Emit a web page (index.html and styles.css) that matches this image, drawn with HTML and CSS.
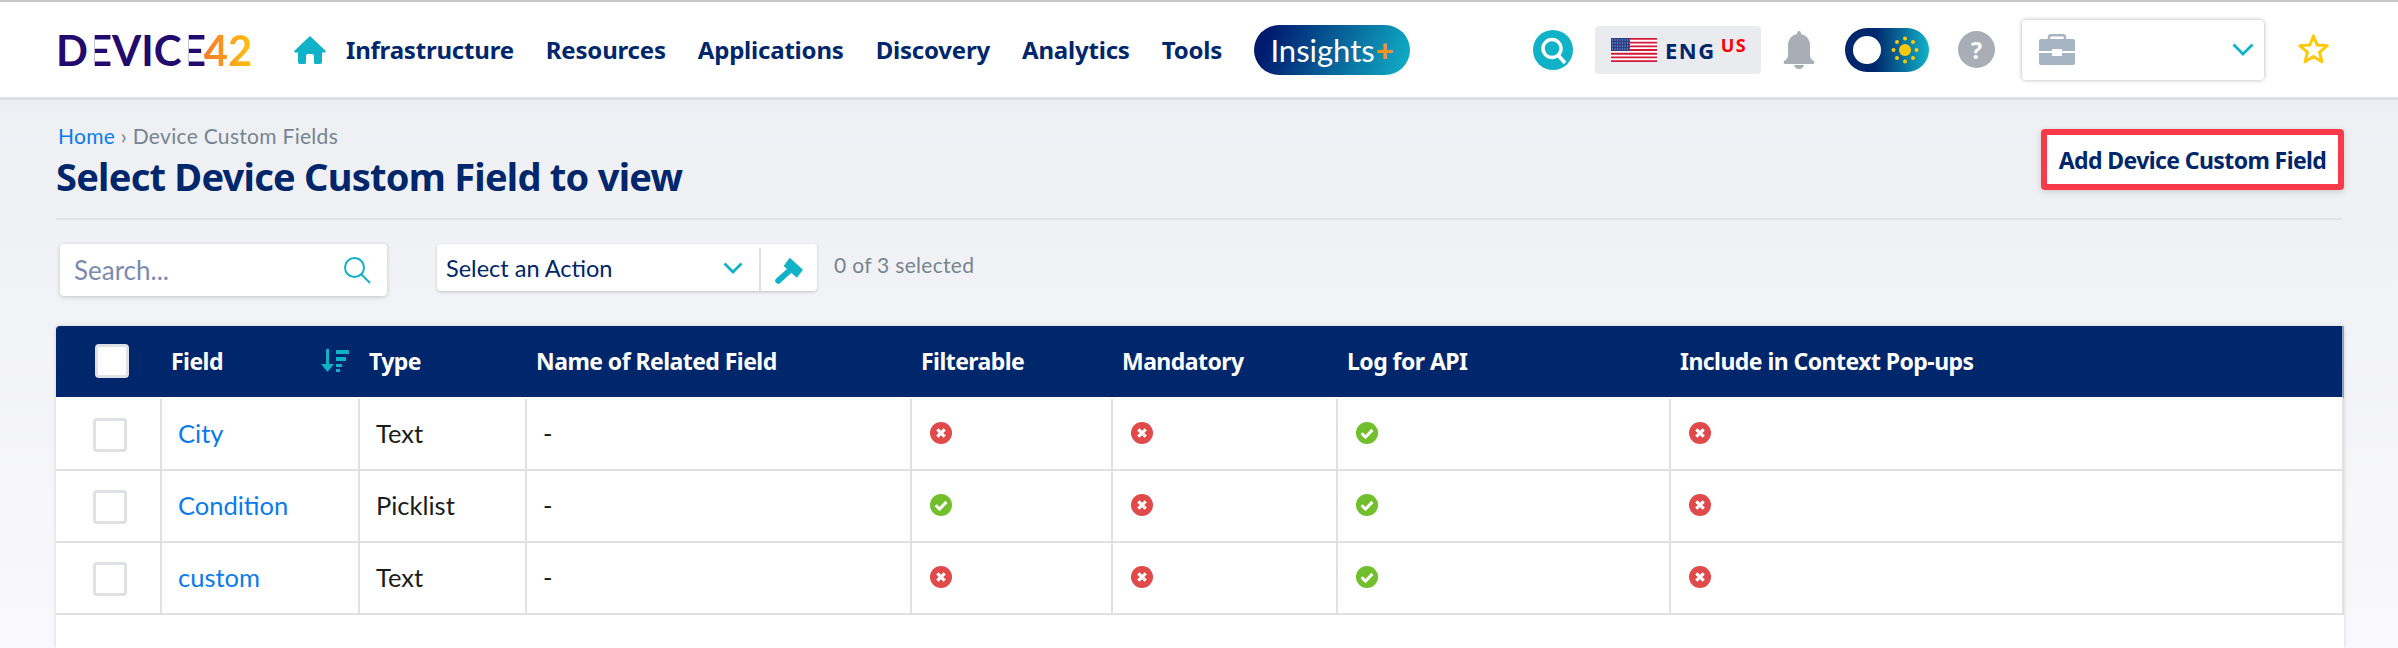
FILE: index.html
```html
<!DOCTYPE html>
<html lang="en">

<head>
    <meta charset="UTF-8">
    <meta name="viewport" content="width=device-width, initial-scale=1.0">
    <title>Device Custom Fields</title>
    <link rel="stylesheet" href="styles.css">
</head>

<body>
    <svg class="defs" width="0" height="0">
        <symbol id="no" viewBox="0 0 22 22">
            <circle cx="11" cy="11" r="11" fill="#e04a4a" />
            <path d="M7.3 7.3l7.4 7.4M14.7 7.3l-7.4 7.4" stroke="#fff" stroke-width="3.2" />
        </symbol>
        <symbol id="yes" viewBox="0 0 22 22">
            <circle cx="11" cy="11" r="11" fill="#72bf2c" />
            <path d="M5.6 11.2l3.9 3.9 7-7.2" stroke="#fff" stroke-width="3" fill="none" />
        </symbol>
    </svg>

    <header class="topbar">
        <a class="logo">D<span class="logo-e">E</span>VIC<span class="logo-e">E</span><span class="logo-num">42</span></a>
        <svg class="home-icon" width="32" height="28" viewBox="0 0 32 28">
            <path fill="#10b2c8" d="M16 0L31.300 14.600Q32.500 16.500 30 16.500H28V26Q28 28 26 28H21Q20 28 20 26V20Q20 18 18 18H14Q12 18 12 20V26Q12 28 11 28H6Q4 28 4 26V16.500H2Q-.5 16.500 .7 14.600Z" />
        </svg>
        <nav class="nav">
            <a>Infrastructure</a>
            <a>Resources</a>
            <a>Applications</a>
            <a>Discovery</a>
            <a>Analytics</a>
            <a>Tools</a>
        </nav>
        <a class="insights">Insights<span class="plus">+</span></a>

        <svg class="search-icon" width="40" height="40" viewBox="0 0 40 40">
            <circle cx="20" cy="20" r="20" fill="#10b2c8" />
            <circle cx="19" cy="18.500" r="9" fill="none" stroke="#fff" stroke-width="3.500" />
            <path d="M25 25l7 8" stroke="#fff" stroke-width="3.500" />
        </svg>
        <div class="lang">
            <svg width="46" height="24" viewBox="0 0 46 24">
                <rect width="46" height="24" fill="#fff" />
                <path stroke="#d3193a" stroke-width="1.850" d="M0 .9H46M0 4.600H46M0 8.300H46M0 12H46M0 15.700H46M0 19.400H46M0 23.100H46" />
                <rect width="19" height="13" fill="#2a3f86" />
                <path stroke="#aab4d8" stroke-width="1" stroke-dasharray="1 1.500" d="M1 2H19M1 5H19M1 8H19M1 11H19" />
            </svg>
            <span class="lang-eng">ENG</span>
            <span class="lang-us">US</span>
        </div>
        <svg class="bell" width="32" height="38" viewBox="0 0 32 38">
            <path fill="#a9aeb6" d="M16 0Q18 0 18 3Q27 5 27 15V24Q27 28 31 30Q32 33 30 33H2Q0 33 1 30Q5 28 5 24V15Q5 5 14 3Q14 0 16 0Z" />
            <path fill="#a9aeb6" d="M11 34H21Q20 38 16 38Q12 38 11 34Z" />
        </svg>
        <div class="theme-toggle">
            <span class="knob"></span>
            <svg width="30" height="30" viewBox="0 0 30 30">
                <circle cx="15" cy="15" r="6" fill="#ffc90b" />
                <g fill="#ffc90b">
                    <circle cx="15" cy="3.500" r="2" />
                    <circle cx="15" cy="26.500" r="2" />
                    <circle cx="3.500" cy="15" r="2" />
                    <circle cx="26.500" cy="15" r="2" />
                    <circle cx="7" cy="7" r="2" />
                    <circle cx="23" cy="7" r="2" />
                    <circle cx="7" cy="23" r="2" />
                    <circle cx="23" cy="23" r="2" />
                </g>
            </svg>
        </div>
        <span class="help">?</span>
        <div class="tenant">
            <svg width="36" height="31" viewBox="0 0 36 31">
                <path fill="none" stroke="#a7b4c2" stroke-width="2.500" d="M10 6V3Q10 1.200 12 1.200H24Q26 1.200 26 3V6" />
                <path fill="#a7b4c2" d="M2 5H34Q36 5 36 7V17H23V15H13V17H0V7Q0 5 2 5Z" />
                <path fill="#a7b4c2" d="M0 19H13V22H23V19H36V29Q36 31 34 31H2Q0 31 0 29Z" />
            </svg>
            <svg width="22" height="13" viewBox="0 0 22 13">
                <path d="M1.500 1.500L11 11 20.500 1.500" fill="none" stroke="#10b2c8" stroke-width="2.800" />
            </svg>
        </div>
        <svg class="star" width="33" height="33" viewBox="0 0 33 33">
            <path fill="none" stroke="#ffc90b" stroke-width="3" stroke-linejoin="round" d="M16.500 3l3.700 9.100 10 .7-7.700 6.300 2.500 9.700-8.500-5.300-8.500 5.300 2.500-9.700-7.700-6.300 10-.7z" />
        </svg>
    </header>

    <main class="content">
        <div class="page-head">
            <div>
                <div class="breadcrumb"><a>Home</a> › Device Custom Fields</div>
                <h1>Select Device Custom Field to view</h1>
            </div>
            <button class="add-btn" type="button">Add Device Custom Field</button>
        </div>

        <div class="toolbar">
            <div class="search-box">
                <span class="search-text">Search...</span>
                <svg width="28" height="28" viewBox="0 0 28 28">
                    <circle cx="11.500" cy="11.500" r="9.500" fill="none" stroke="#10b2c8" stroke-width="2" />
                    <path d="M18.500 18.500L27 27" stroke="#10b2c8" stroke-width="2" />
                </svg>
            </div>
            <div class="action-box">
                <span class="action-text">Select an Action</span>
                <svg width="20" height="12" viewBox="0 0 20 12">
                    <path d="M1.500 1.500L10 10 18.500 1.500" fill="none" stroke="#10b2c8" stroke-width="2.800" />
                </svg>
                <span class="action-btn">
                    <svg width="28" height="28" viewBox="0 0 26 26">
                        <path fill="#10b2c8" d="M13.700 1.700L26 12.700 20.300 20.300 8 9.300Z" />
                        <path d="M13 14L3 23" stroke="#10b2c8" stroke-width="5.500" stroke-linecap="round" />
                    </svg>
                </span>
            </div>
            <span class="count">0 of 3 selected</span>
        </div>

        <div class="table-card">
            <table class="fields">
                <colgroup>
                    <col class="c-check">
                    <col class="c-field">
                    <col class="c-type">
                    <col class="c-related">
                    <col class="c-filter">
                    <col class="c-mand">
                    <col class="c-log">
                    <col>
                </colgroup>
                <thead>
                    <tr>
                        <th class="check-cell"><input class="check" type="checkbox"></th>
                        <th>
                            <div class="sort-head">
                                Field
                                <svg width="28" height="23" viewBox="0 0 28 23">
                                    <path fill="#10b2c8" d="M5 0H8V15H13L6.500 23 0 15H5Z" />
                                    <path fill="#10b2c8" d="M15 1H28V5H15ZM15 8H25V12H15ZM15 15H21V18H15ZM15 20H19V23H15Z" />
                                </svg>
                            </div>
                        </th>
                        <th>Type</th>
                        <th>Name of Related Field</th>
                        <th>Filterable</th>
                        <th>Mandatory</th>
                        <th>Log for API</th>
                        <th>Include in Context Pop-ups</th>
                    </tr>
                </thead>
                <tbody>
                    <tr>
                        <td class="check-cell"><input class="check" type="checkbox"></td>
                        <td><a>City</a></td>
                        <td>Text</td>
                        <td>-</td>
                        <td><svg class="status"><use href="#no" /></svg></td>
                        <td><svg class="status"><use href="#no" /></svg></td>
                        <td><svg class="status"><use href="#yes" /></svg></td>
                        <td><svg class="status"><use href="#no" /></svg></td>
                    </tr>
                    <tr>
                        <td class="check-cell"><input class="check" type="checkbox"></td>
                        <td><a>Condition</a></td>
                        <td>Picklist</td>
                        <td>-</td>
                        <td><svg class="status"><use href="#yes" /></svg></td>
                        <td><svg class="status"><use href="#no" /></svg></td>
                        <td><svg class="status"><use href="#yes" /></svg></td>
                        <td><svg class="status"><use href="#no" /></svg></td>
                    </tr>
                    <tr>
                        <td class="check-cell"><input class="check" type="checkbox"></td>
                        <td><a>custom</a></td>
                        <td>Text</td>
                        <td>-</td>
                        <td><svg class="status"><use href="#no" /></svg></td>
                        <td><svg class="status"><use href="#no" /></svg></td>
                        <td><svg class="status"><use href="#yes" /></svg></td>
                        <td><svg class="status"><use href="#no" /></svg></td>
                    </tr>
                </tbody>
            </table>
        </div>
    </main>
</body>

</html>
```

FILE: styles.css
```css
* {
  box-sizing: border-box;
}

html,
body {
  height: 100%;
}

body {
  margin: 0;
  display: flex;
  flex-direction: column;
  overflow: hidden;
  background: linear-gradient(#ecedf2, #f9f9fb);
  font-family: "Lato", sans-serif;
  color: #00266b;
}

.defs {
  position: absolute;
}

/* top bar */
.topbar {
  flex: none;
  height: 100px;
  display: flex;
  align-items: center;
  padding: 0 68px 0 56px;
  background: #fff;
  border-top: 2px solid #c8c8c8;
  border-bottom: 3px solid #dfe0e7;
}

.logo {
  width: 194px;
  font-size: 42px;
  font-weight: 700;
  line-height: 1;
  color: #220a6e;
  white-space: nowrap;
}

/* the logo's E has no spine, just the three bars */
.logo-e {
  display: inline-block;
  clip-path: inset(0 0 0 9px);
  transform: scaleX(1.150);
  transform-origin: 100% 50%;
}

.logo-num {
  margin-left: -2px;
  background: linear-gradient(90deg, #f47b2c, #ffc20e);
  -webkit-background-clip: text;
  background-clip: text;
  color: transparent;
}

.home-icon {
  margin-left: 44px;
}

.nav {
  display: flex;
  gap: 32px;
  margin-left: 20px;
  font-family: "Noto Sans", sans-serif;
  font-size: 24px;
  font-weight: 700;
  letter-spacing: -0.200px;
}

.insights {
  width: 156px;
  height: 50px;
  margin-left: 32px;
  display: flex;
  align-items: center;
  justify-content: center;
  border-radius: 25px;
  background: linear-gradient(110deg, #001a6e 10%, #10b2c8 100%);
  color: #fff;
  font-size: 31px;
}

.plus {
  margin-left: 1px;
  color: #f7931e;
  font-weight: 900;
}

.search-icon {
  margin-left: auto;
}

.lang {
  width: 166px;
  height: 48px;
  margin-left: 22px;
  display: flex;
  align-items: center;
  padding-left: 16px;
  border-radius: 4px;
  background: #e9ebef;
}

.lang-eng {
  margin-left: 8px;
  font-family: "Noto Sans", sans-serif;
  font-size: 22px;
  font-weight: 700;
  letter-spacing: 1.500px;
}

.lang-us {
  margin: -10px 0 0 5px;
  color: #f00;
  font-family: "Noto Sans", sans-serif;
  font-size: 18px;
  font-weight: 700;
  letter-spacing: 1.500px;
}

.bell {
  margin-left: 22px;
}

.theme-toggle {
  width: 84px;
  height: 44px;
  margin-left: 30px;
  display: flex;
  align-items: center;
  justify-content: space-between;
  padding: 0 9px 0 8px;
  border-radius: 22px;
  background: linear-gradient(90deg, #00266b 35%, #10b2c8 100%);
}

.knob {
  width: 28px;
  height: 28px;
  border-radius: 50%;
  background: #fff;
}

.help {
  width: 37px;
  height: 37px;
  margin-left: 29px;
  display: flex;
  align-items: center;
  justify-content: center;
  border-radius: 50%;
  background: #a9aeb6;
  color: #fff;
  font-family: "Noto Sans", sans-serif;
  font-size: 23px;
  font-weight: 700;
}

.tenant {
  width: 242px;
  height: 60px;
  margin-left: 27px;
  display: flex;
  align-items: center;
  justify-content: space-between;
  padding: 0 10px 0 17px;
  border-radius: 4px;
  background: #fff;
  box-shadow: 0 0 4px rgba(0, 0, 0, 0.3);
}

.star {
  margin-left: 33px;
}

/* page */
.content {
  flex: 1;
  display: flex;
  flex-direction: column;
  min-height: 0;
  padding: 22px 54px 0 56px;
}

.page-head {
  display: flex;
  justify-content: space-between;
  align-items: flex-start;
  height: 98px;
  margin-right: 2px;
  border-bottom: 2px solid #e0e2e6;
}

.breadcrumb {
  padding-left: 2px;
  font-size: 21px;
  line-height: 28px;
  letter-spacing: 0.300px;
  color: #76848f;
}

.breadcrumb a {
  color: #0a7bea;
}

h1 {
  margin: 4px 0 0;
  font-family: "Noto Sans", sans-serif;
  font-size: 38px;
  font-weight: 700;
  line-height: 44px;
  letter-spacing: -0.750px;
}

.add-btn {
  width: 303px;
  height: 61px;
  margin: 7px -2px 0 0;
  padding: 0;
  border: 6px solid #fa3a4a;
  border-radius: 4px;
  background: #fff;
  box-shadow: 0 2px 6px rgba(0, 0, 0, 0.15);
  color: #00266b;
  font-family: "Noto Sans", sans-serif;
  font-size: 23px;
  font-weight: 700;
  letter-spacing: -0.600px;
}

.toolbar {
  flex: none;
  display: flex;
  align-items: flex-start;
  margin: 24px 0 30px 4px;
}

.search-box {
  width: 327px;
  height: 52px;
  display: flex;
  align-items: center;
  justify-content: space-between;
  padding: 0 16px 0 14px;
  border-radius: 4px;
  background: #fff;
  box-shadow: 0 1px 4px rgba(0, 0, 0, 0.2);
}

.search-text {
  color: #7c8ab0;
  font-size: 26px;
}

.action-box {
  width: 380px;
  height: 47px;
  margin-left: 50px;
  display: flex;
  align-items: center;
  padding-left: 9px;
  border-radius: 4px;
  background: #fff;
  box-shadow: 0 1px 3px rgba(0, 0, 0, 0.2);
}

.action-text {
  flex: 1;
  font-size: 23.500px;
}

.action-btn {
  width: 58px;
  height: 43px;
  margin-left: 16px;
  align-self: flex-end;
  display: flex;
  align-items: center;
  justify-content: center;
  border-left: 2px solid #e0e2e6;
}

.count {
  margin-left: 17px;
  color: #76848f;
  font-size: 21px;
  line-height: 42px;
  letter-spacing: 0.300px;
}

/* table */
.table-card {
  flex: 1;
  border-radius: 4px 4px 0 0;
  background: #fff;
  box-shadow: 0 0 4px rgba(0, 0, 0, 0.15);
}

.fields {
  width: 100%;
  table-layout: fixed;
  border-collapse: separate;
  border-spacing: 0;
}

.c-check {
  width: 106px;
}

.c-field {
  width: 198px;
}

.c-type {
  width: 167px;
}

.c-related {
  width: 385px;
}

.c-filter {
  width: 201px;
}

.c-mand {
  width: 225px;
}

.c-log {
  width: 333px;
}

.fields th {
  height: 73px;
  padding: 0 10px 2px 9px;
  border-bottom: 2px solid #fff;
  background: #00266b;
  color: #fff;
  font-family: "Noto Sans", sans-serif;
  font-size: 23px;
  font-weight: 700;
  letter-spacing: -0.550px;
  text-align: left;
}

.fields th:first-child {
  border-top-left-radius: 4px;
}

.fields th:last-child {
  border-right: 2px solid #8fa0c0;
}

.fields td {
  height: 72px;
  padding: 0 10px 2px 16px;
  border-right: 2px solid #dfe1e6;
  border-bottom: 2px solid #dfe1e6;
  color: #1c1c1c;
  font-size: 25.500px;
}

.fields td a {
  color: #0a7bea;
}

.fields th.check-cell {
  padding-left: 39px;
}

.fields td.check-cell {
  padding-left: 37px;
}

.check {
  appearance: none;
  display: block;
  width: 34px;
  height: 34px;
  margin: 0;
  border: 3px solid #dfe1e6;
  border-radius: 4px;
  background: #fff;
}

td .check {
  margin-top: 4px;
}

.sort-head {
  display: flex;
  align-items: center;
  justify-content: space-between;
  padding-right: 1px;
}

.status {
  display: block;
  width: 22px;
  height: 22px;
  margin-left: 2px;
}
```
